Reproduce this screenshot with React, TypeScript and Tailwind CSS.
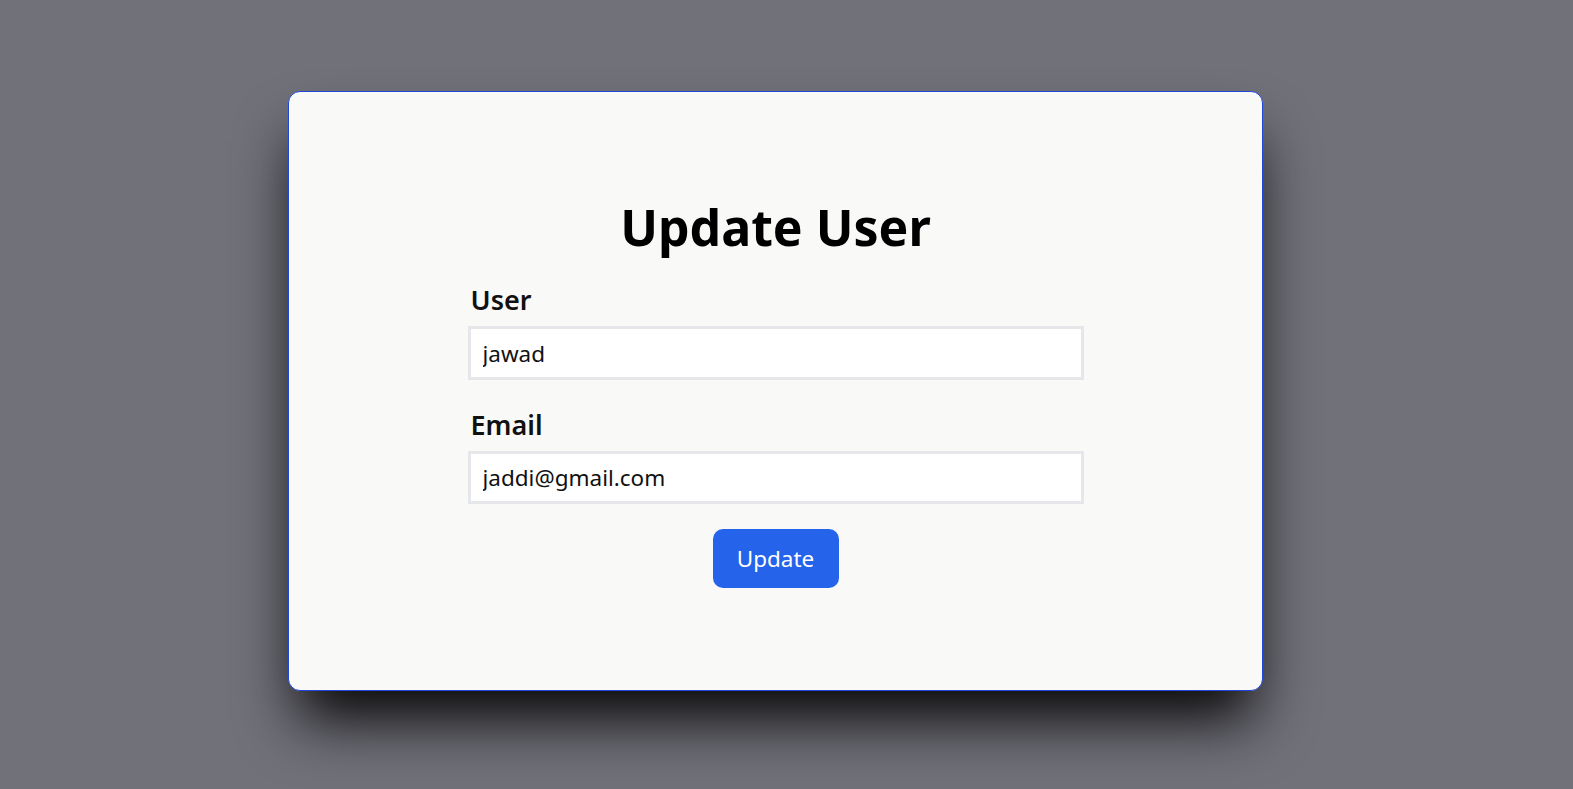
import { useState } from "react";

function UpdateUser() {
  const [name, setName] = useState("jawad");
  const [email, setEmail] = useState("jaddi@gmail.com");

  return (
    <div className="ml-[288px] pt-[91px]">
      <div className="flex h-[600px] w-[975px] flex-col items-center rounded-xl border border-[#2346d8] bg-[#f9f9f8] pt-[110px] shadow-[0_38px_60px_-10px_rgba(0,0,0,0.95)]">
        {/* Heading */}
        <h1 className="text-[50px] leading-[50px] font-bold text-black">Update User</h1>

        {/* Form */}
        <form className="mt-[32px] flex w-[616px] flex-col" onSubmit={(e) => e.preventDefault()}>
          <label className="mb-[10px] pl-[3px] text-[27px] leading-8 font-semibold text-[#111]">User</label>
          <input
            value={name}
            onChange={(e) => setName(e.target.value)}
            className="h-[54px] border-[3px] border-[#e5e7eb] bg-white px-3 text-[22.5px] text-[#111] outline-none"
          />

          <label className="mt-[29px] mb-[10px] pl-[3px] text-[27px] leading-8 font-semibold text-[#111]">Email</label>
          <input
            value={email}
            onChange={(e) => setEmail(e.target.value)}
            className="h-[53px] border-[3px] border-[#e5e7eb] bg-white px-3 text-[22.5px] text-[#111] outline-none"
          />

          <button
            type="submit"
            className="mx-auto mt-[25px] h-[59px] w-[126px] rounded-[10px] bg-[#2563eb] text-[22.5px] text-white"
          >
            Update
          </button>
        </form>
      </div>
    </div>
  );
}

export default function App() {
  return (
    <div className="min-h-[789px] w-full bg-[#71717a] font-['Noto_Sans',sans-serif]">
      <UpdateUser />
    </div>
  );
}
